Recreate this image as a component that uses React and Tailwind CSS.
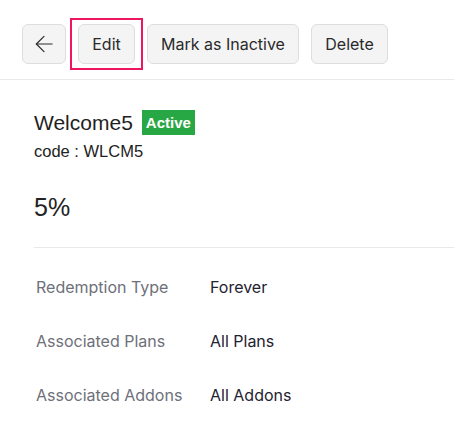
import React from 'react';

const rows = [
  { label: 'Redemption Type', value: 'Forever' },
  { label: 'Associated Plans', value: 'All Plans' },
  { label: 'Associated Addons', value: 'All Addons' },
];

function BackIcon() {
  return (
    <svg width="20" height="20" viewBox="0 0 20 20" fill="none" stroke="#2a2a2a" strokeWidth="1.3" strokeLinecap="round" strokeLinejoin="round">
      <path d="M19 10H1.5" />
      <path d="M10 1.5L1.5 10l8.5 8.5" />
    </svg>
  );
}

export default function App() {
  const btn = 'h-10 px-3 rounded-md border border-[#dedede] bg-[#f4f4f4] text-[16px] text-[#2a2a2a] flex items-center justify-center';
  return (
    <div className="w-[454px] h-[447px] bg-white overflow-hidden font-['Inter',sans-serif]">
      <div className="h-20 border-b border-[#e8e8e8] flex items-start gap-3 pl-[22px] pt-6">
        <button className={btn + ' w-11 px-0'}>
          <BackIcon />
        </button>
        <div className="relative">
          <button className={btn + ' w-[57px]'}>Edit</button>
          <div className="absolute -left-2 -right-2 -top-1.5 -bottom-1.5 border-2 border-[#ef1660] pointer-events-none" />
        </div>
        <button className={btn + ' w-[152px]'}>Mark as Inactive</button>
        <button className={btn + ' w-[77px]'}>Delete</button>
      </div>

      <div className="pl-[34px]">
        <div className="pt-[30px] flex items-center gap-[9px] font-['Liberation_Sans',Arial,sans-serif]">
          <span className="text-[21px] leading-[25px] text-[#1f1f1f]">Welcome5</span>
          <span className="bg-[#28a745] text-white text-[15px] font-bold leading-[25px] px-1">Active</span>
        </div>
        <div className="mt-[7px] text-[16.5px] leading-[18px] text-[#222] font-['Liberation_Sans',Arial,sans-serif]">code : WLCM5</div>
        <div className="mt-[33px] text-[25px] leading-[28px] text-[#222] font-['Liberation_Sans',Arial,sans-serif]">5%</div>
        <div className="mt-[26px] border-t border-[#e8e8e8]" />
        <div className="pt-[29px] pl-[2px] flex flex-col gap-[34px]">
          {rows.map((r) => (
            <div key={r.label} className="flex items-center text-[16px] leading-5">
              <span className="w-[174px] text-[#6e7079]">{r.label}</span>
              <span className="text-[#1f2230]">{r.value}</span>
            </div>
          ))}
        </div>
      </div>
    </div>
  );
}
